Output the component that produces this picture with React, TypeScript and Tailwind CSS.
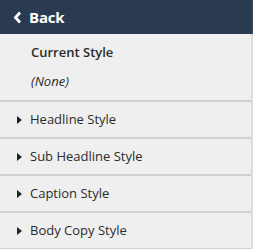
import React from "react";

const rows = ["Headline Style", "Sub Headline Style", "Caption Style", "Body Copy Style"];

export default function App() {
  return (
    <div className="w-[253px] h-[249px] bg-[#efefef] overflow-hidden" style={{ fontFamily: '"Open Sans", sans-serif' }}>
      <div className="h-[34px] bg-[#2a3b51] flex items-center pl-[13px] border-r border-[#3d4b5e]">
        <svg width="9" height="13" viewBox="0 0 9 13" className="mr-[7px]">
          <path d="M7 1.5 L2.5 6.5 L7 11.5" stroke="#fff" strokeWidth="2.8" fill="none" strokeLinejoin="miter" />
        </svg>
        <span className="text-white font-bold text-[15px] leading-none tracking-[-0.2px]">Back</span>
      </div>
      <div className="border-r-2 border-[#dcdcdc]">
        <div className="h-[66px] pl-[31px] pt-[9px] text-[#2b2b2b]">
          <div className="text-[13px] font-semibold leading-[18px]">Current Style</div>
          <div className="text-[13px] italic leading-[18px] mt-[11px]">(None)</div>
        </div>
        {rows.map((r) => (
          <div key={r} className="h-[37px] border-t-2 border-[#d0d0d0] flex items-center pl-[17px] text-[#2b2b2b]">
            <svg width="5" height="8" viewBox="0 0 5 8" className="mr-[8px]">
              <path d="M0 0 L5 4 L0 8 Z" fill="#222" />
            </svg>
            <span className="text-[13px] leading-none">{r}</span>
          </div>
        ))}
        <div className="h-[2px] bg-[#d0d0d0]" />
      </div>
    </div>
  );
}
